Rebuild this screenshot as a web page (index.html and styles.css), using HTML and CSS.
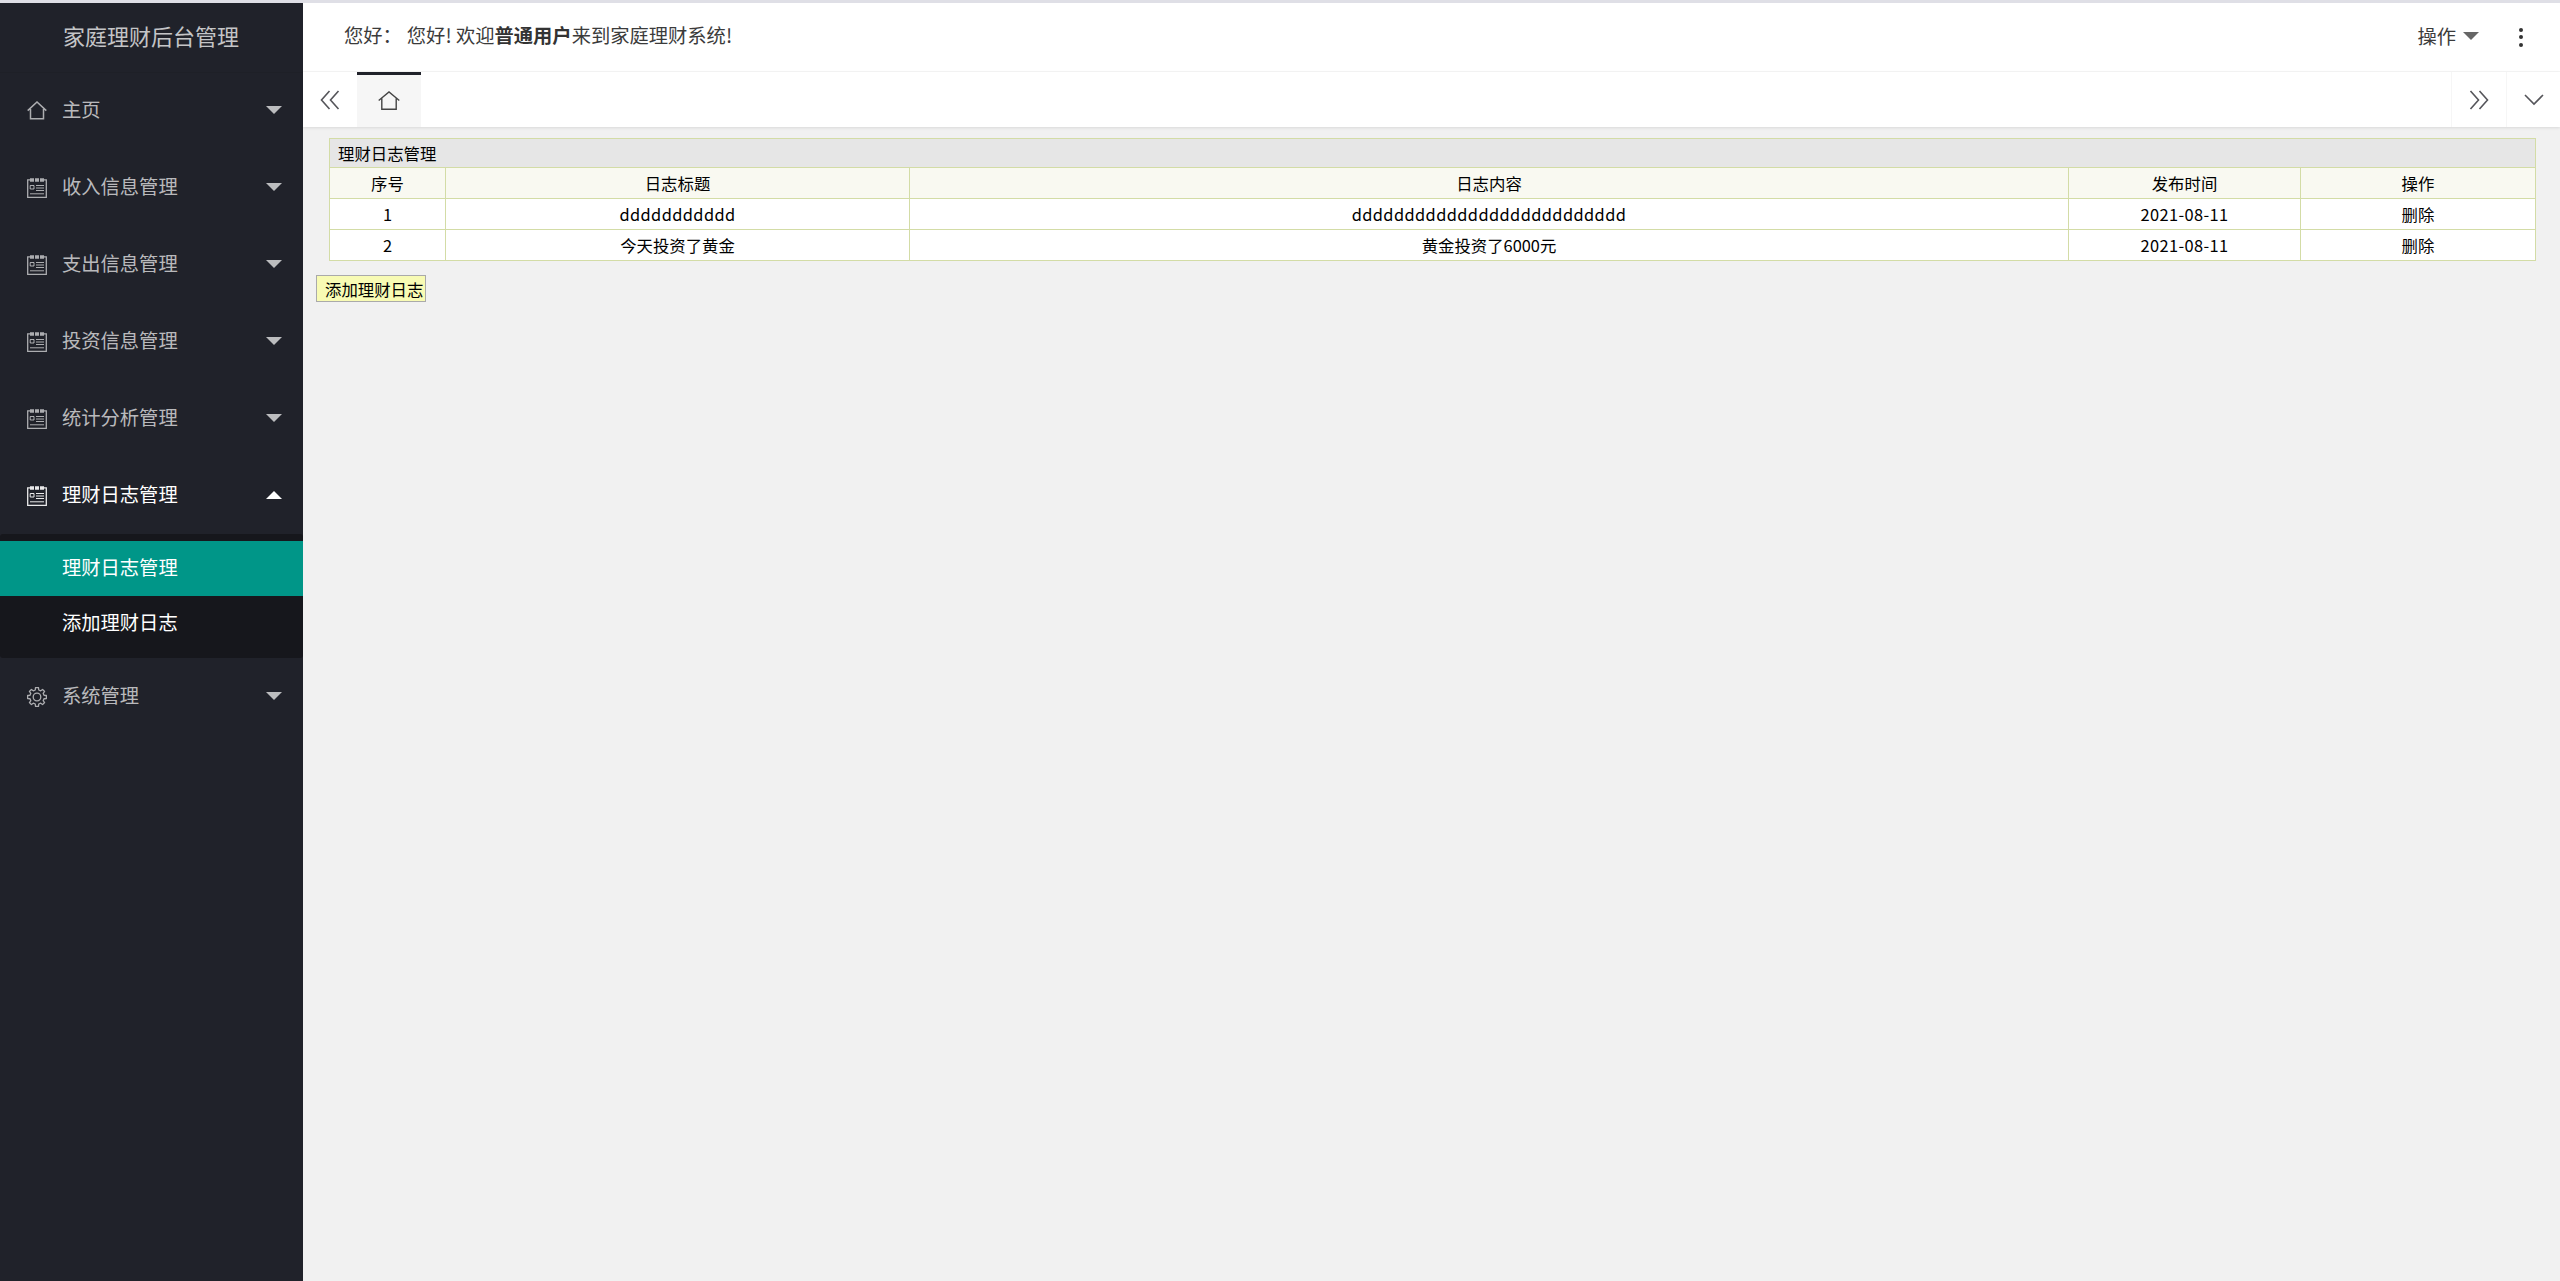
FILE: index.html
```html
<!DOCTYPE html>
<html lang="zh-CN">
<head>
<meta charset="utf-8">
<title>家庭理财后台管理</title>
<link rel="stylesheet" href="styles.css">
</head>
<body>
<svg class="defs" width="0" height="0" aria-hidden="true">
  <symbol id="i-home" viewBox="0 0 20 20"><path d="M.7 9.600 10 1l9.300 8.600M3.500 8v9.800h13V8" fill="none" stroke="currentColor" stroke-width="1.500"/></symbol>
  <symbol id="i-list" viewBox="0 0 20 20"><path d="M3 1.800H.7v17.500h18.600V1.800H17" fill="none" stroke="currentColor" stroke-width="1.300"/><path d="M3 .3h4v3.500H3zM8 .3h4v3.500H8zM13 .3h4v3.500h-4z" fill="currentColor"/><path d="M3.200 7.500h3.800v3.500H3.200zM9 7.500h8M9 10h8M9 12.500h8M3 15.800h14" fill="none" stroke="currentColor" stroke-width="1"/></symbol>
  <symbol id="i-gear" viewBox="0 0 20 20"><path d="M17 8.260 19.380 8.510V11.490L17 11.740 16.170 13.710 17.590 15.580 15.580 17.590 13.710 16.170 11.740 17 11.490 19.380H8.510L8.260 17 6.290 16.170 4.420 17.590 2.410 15.580 3.830 13.710 3 11.740 .62 11.490V8.510L3 8.260 3.830 6.290 2.410 4.420 4.420 2.410 6.290 3.830 8.260 3 8.510 .62H11.490L11.740 3 13.710 3.830 15.580 2.410 17.590 4.420 16.170 6.290Z" fill="none" stroke="currentColor" stroke-width="1.300" stroke-linejoin="round"/><circle cx="10" cy="10" r="3.800" fill="none" stroke="currentColor" stroke-width="1.300"/></symbol>
</svg>
<div class="app">
  <aside class="sidebar">
    <div class="logo"><span class="logo-text">家庭理财后台管理</span></div>
    <nav class="menu">
      <a class="item"><svg class="icon"><use href="#i-home"/></svg><span>主页</span><i class="caret"></i></a>
      <a class="item"><svg class="icon"><use href="#i-list"/></svg><span>收入信息管理</span><i class="caret"></i></a>
      <a class="item"><svg class="icon"><use href="#i-list"/></svg><span>支出信息管理</span><i class="caret"></i></a>
      <a class="item"><svg class="icon"><use href="#i-list"/></svg><span>投资信息管理</span><i class="caret"></i></a>
      <a class="item"><svg class="icon"><use href="#i-list"/></svg><span>统计分析管理</span><i class="caret"></i></a>
      <a class="item open"><svg class="icon"><use href="#i-list"/></svg><span>理财日志管理</span><i class="caret up"></i></a>
      <div class="submenu">
        <a class="subitem active"><span>理财日志管理</span></a>
        <a class="subitem"><span>添加理财日志</span></a>
      </div>
      <a class="item"><svg class="icon"><use href="#i-gear"/></svg><span>系统管理</span><i class="caret"></i></a>
    </nav>
  </aside>
  <main class="main">
    <header class="topbar">
      <div class="greeting">您好：<span class="welcome">您好! 欢迎<b>普通用户</b>来到家庭理财系统!</span></div>
      <div class="top-actions">
        <span class="ops">操作<i class="caret dark"></i></span>
        <span class="dots"><i></i><i></i><i></i></span>
      </div>
    </header>
    <div class="tabs">
      <button class="tab-btn left"><svg viewBox="0 0 20 20"><path d="M9.500 1 1.500 10l8 9M18.500 1 10.500 10l8 9" fill="none" stroke="currentColor" stroke-width="1.600"/></svg></button>
      <div class="tab"><svg viewBox="0 0 22 20"><path d="M.7 9.500 11 1l10.300 8.500M3.800 7.500v10.800h14.400V7.500" fill="none" stroke="currentColor" stroke-width="1.400"/></svg></div>
      <div class="tab-spacer"></div>
      <button class="tab-btn right"><svg viewBox="0 0 20 20"><path d="M1.500 1 9.500 10l-8 9M10.500 1 18.500 10l-8 9" fill="none" stroke="currentColor" stroke-width="1.600"/></svg></button>
      <button class="tab-btn down"><svg viewBox="0 0 20 12"><path d="M1 1l9 9 9-9" fill="none" stroke="currentColor" stroke-width="1.600"/></svg></button>
    </div>
    <section class="content">
      <table class="grid">
        <colgroup><col class="c1"><col class="c2"><col class="c3"><col class="c4"><col class="c5"></colgroup>
        <thead>
          <tr class="title-row"><th colspan="5">理财日志管理</th></tr>
          <tr class="head-row"><th>序号</th><th>日志标题</th><th>日志内容</th><th>发布时间</th><th>操作</th></tr>
        </thead>
        <tbody>
          <tr><td>1</td><td class="latin">ddddddddddd</td><td class="latin">dddddddddddddddddddddddddd</td><td class="latin">2021-08-11</td><td>删除</td></tr>
          <tr><td>2</td><td>今天投资了黄金</td><td>黄金投资了6000元</td><td class="latin">2021-08-11</td><td>删除</td></tr>
        </tbody>
      </table>
      <button class="add-btn">添加理财日志</button>
    </section>
  </main>
</div>
</body>
</html>
```
FILE: styles.css
```css
* { box-sizing: border-box; }
html, body { margin: 0; height: 100%; }
body { font-family: "Noto Sans CJK SC", "Open Sans", sans-serif; background: #f1f1f1; overflow: hidden; }
.defs { display: block; position: absolute; }
.app { display: grid; grid-template-columns: 303px 1fr; height: 100%; border-top: 3px solid #dfdfe6; }

.sidebar { background: #20222a; color: rgba(255,255,255,.7); }
.logo { height: 69px; display: flex; align-items: center; padding-left: 63px; font-size: 22px; color: #c4c5c7; box-shadow: 0 1px 0 #1e2027; }
.logo-text { margin-bottom: 5px; }
.item { display: flex; align-items: center; height: 77px; padding: 0 21px 0 27px; font-size: 19.3px; }
.item span { margin-left: 15px; margin-bottom: 3px; }
.item.open { color: #fff; }
.icon { width: 20px; height: 20px; flex: none; opacity: .9; }
.caret { margin-left: auto; margin-bottom: 2px; width: 0; height: 0; border: 8.5px solid transparent; border-bottom: 0; border-top: 8px solid currentColor; }
.caret.up { border-top: 0; border-bottom: 8px solid #fff; }
.caret.dark { display: inline-block; margin-left: 7px; margin-bottom: 0; border-top-color: #666; }
.submenu { background: #16171c; border-radius: 3px; padding: 7px 0; height: 124px; }
.subitem { display: flex; align-items: center; height: 55px; padding-left: 62px; font-size: 19.3px; color: #fff; }
.subitem span { margin-bottom: 3px; }
.subitem.active { background: #009688; }

.main { display: flex; flex-direction: column; min-width: 0; }
.topbar { height: 69px; flex: none; background: #fff; border-bottom: 1px solid #f6f6f6; display: flex; align-items: center; justify-content: space-between; padding: 0 37px 0 41px; font-size: 19.3px; color: #3b3b3b; }
.greeting { margin-bottom: 4px; }
.welcome { margin-left: 5px; }
.welcome b { color: #333; }
.top-actions { display: flex; align-items: center; }
.ops { display: flex; align-items: center; margin-bottom: 3px; }
.dots { display: flex; flex-direction: column; gap: 3.500px; margin-left: 40px; }
.dots i { width: 4px; height: 4px; border-radius: 50%; background: #333; }

.tabs { height: 55px; flex: none; background: #fff; display: flex; box-shadow: 0 1px 3px rgba(0,0,0,.1); position: relative; }
.tab-btn { width: 54px; padding: 0; border: 0; background: none; display: flex; align-items: center; justify-content: center; color: #55555a; }
.tab-btn svg { width: 20px; height: 20px; }
.tab-btn.right { border-left: 1px solid #f6f6f6; width: 55px; }
.tab-btn.down { border-left: 1px solid #f6f6f6; }
.tab { width: 64px; background: #f6f6f6; border-top: 3px solid #20222a; display: flex; align-items: center; justify-content: center; color: #444; }
.tab svg { width: 22px; height: 20px; }
.tab-spacer { flex: 1; }

.content { padding: 11px 24px 0 13px; }
.grid { width: calc(100% - 13px); margin-left: 13px; border-collapse: collapse; table-layout: fixed; font-size: 16.4px; color: #000; background: #fff; }
.c1 { width: 116px; }
.c2 { width: 464px; }
.c4 { width: 232px; }
.c5 { width: 235px; }
.grid th, .grid td { border: 1px solid #d3dca6; height: 31px; padding: 0; text-align: center; font-weight: 400; line-height: 1; }
.grid .latin { letter-spacing: .4px; }
.title-row th { background: #e6e6e6; text-align: left; padding-left: 8px; height: 29px; }
.head-row th { background: #f9f9f1; }
.add-btn { display: block; margin-top: 14px; width: 110px; height: 27px; padding: 0 0 0 8px; border: 1px solid #aaa; background: #f8fbb4; font: inherit; font-size: 16.4px; color: #000; text-align: left; white-space: nowrap; overflow: hidden; }
```
